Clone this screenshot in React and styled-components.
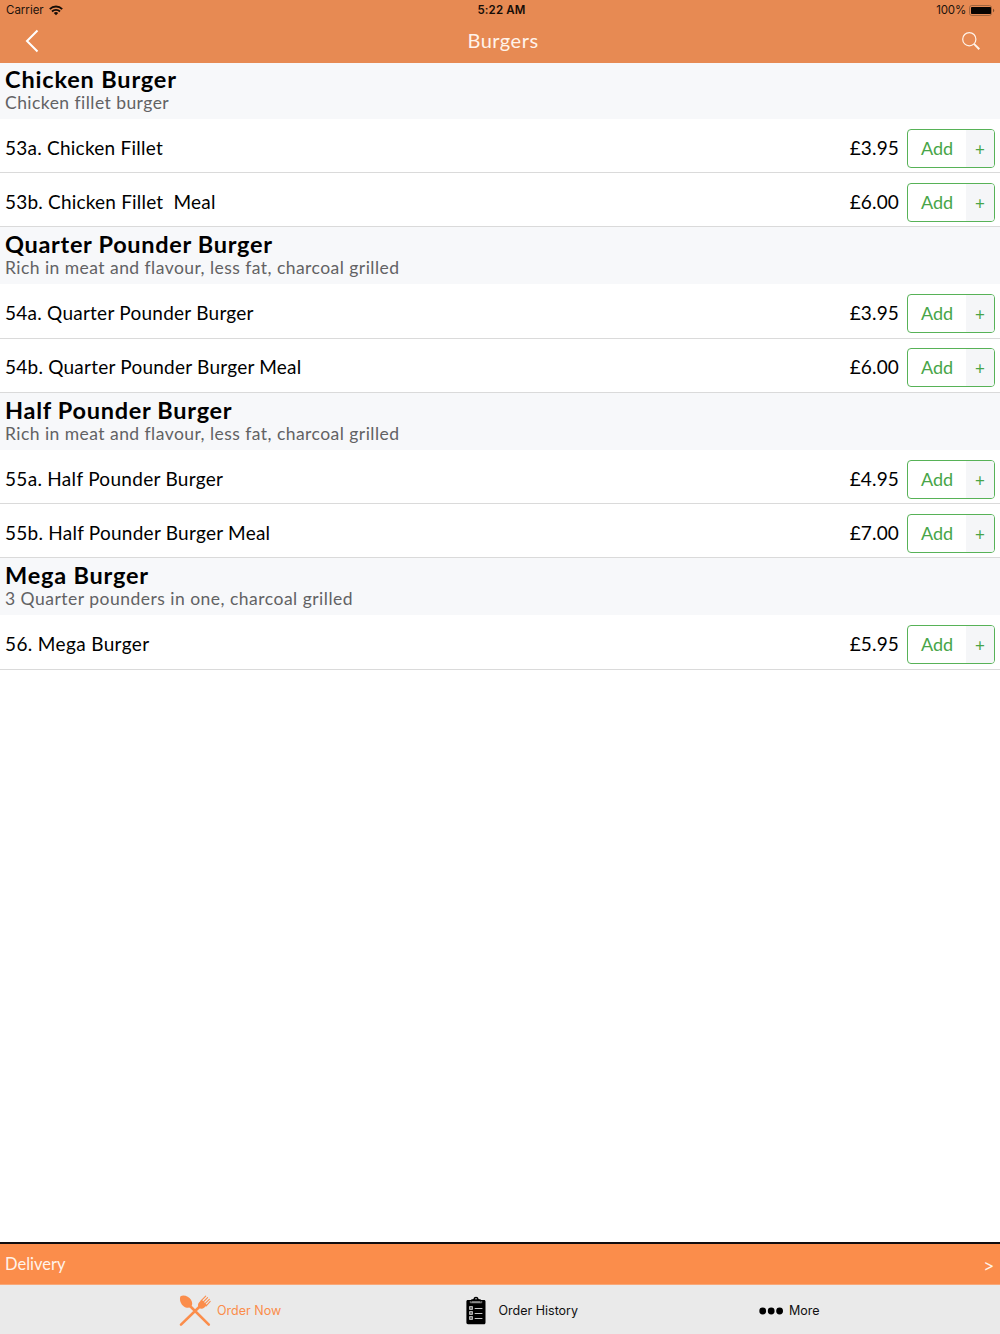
import React from 'react';
import styled, { createGlobalStyle } from 'styled-components';

const Global = createGlobalStyle`
  * { box-sizing: border-box; }
  body { margin: 0; background: #fff; font-family: Lato, "Liberation Sans", sans-serif; color: #000; }
  button { font: inherit; margin: 0; padding: 0; border: 0; background: none; color: inherit; }
  svg { display: block; }
`;

const Screen = styled.div`
  width: 1000px;
  height: 1334px;
  display: flex;
  flex-direction: column;
  overflow: hidden;
`;

const Header = styled.header`
  height: 63px;
  flex: none;
  background: #e78a53;
`;

const StatusBar = styled.div`
  height: 20px;
  display: grid;
  grid-template-columns: 1fr auto 1fr;
  align-items: center;
  padding: 1px 6px 0 6px;
  font: 11.5px/19px Inter, sans-serif;
  color: #1c120c;
`;

const Carrier = styled.div`
  display: flex;
  align-items: center;
  gap: 5.5px;
`;

const Clock = styled.div`
  font-weight: 600;
  color: #150d08;
  letter-spacing: 0.15px;
  padding-left: 3px;
`;

const Power = styled.div`
  display: flex;
  align-items: center;
  justify-content: flex-end;
  gap: 3px;
  letter-spacing: -0.2px;
  margin-right: -1px;
`;

const NavBar = styled.div`
  height: 42px;
  display: grid;
  grid-template-columns: 60px 1fr 60px;
  align-items: center;
  color: #fff;
`;

const Title = styled.h1`
  margin: 0;
  padding: 0 0 2px 6px;
  text-align: center;
  font-size: 20px;
  line-height: 24px;
  font-weight: 400;
  letter-spacing: 0.5px;
  color: #fff3ea;
`;

const BackButton = styled.button`
  padding-left: 24px;
`;

const SearchButton = styled.button`
  padding-left: 21px;
`;

const Menu = styled.main`
  flex: 1;
  min-height: 0;
`;

const GroupHeader = styled.div`
  height: ${(p) => (p.$first ? 55.8 : 56.8)}px;
  display: flex;
  flex-direction: column;
  justify-content: flex-end;
  padding: 0 5px 5px;
  background: #f7f8fa;
`;

const GroupTitle = styled.h2`
  margin: 0;
  font-size: 23.5px;
  line-height: 24px;
  font-weight: 700;
  letter-spacing: ${(p) => p.$track}px;
`;

const GroupNote = styled.p`
  margin: 0;
  font-size: 17.5px;
  line-height: 23px;
  color: #626264;
  letter-spacing: ${(p) => p.$track}px;
`;

const Row = styled.div`
  height: 54.35px;
  display: flex;
  align-items: center;
  padding: 5.4px 5px 0;
  border-bottom: 1px solid #dadada;
`;

const ItemName = styled.div`
  flex: 1;
  font-size: 19px;
  line-height: 24px;
  white-space: pre;
  letter-spacing: ${(p) => p.$track}px;
  padding-bottom: 1px;
`;

const Price = styled.div`
  font-size: 19px;
  line-height: 24px;
  letter-spacing: 0.15px;
  margin-right: 8px;
  padding-bottom: 1px;
`;

const AddButton = styled.button`
  width: 88px;
  height: 39px;
  display: flex;
  border: 1px solid #57b257;
  border-radius: 4px;
  overflow: hidden;
  color: #48a548;
  background: #fff;
`;

const AddLabel = styled.span`
  width: 58px;
  font-size: 18px;
  line-height: 37px;
  text-align: center;
`;

const AddPlus = styled.span`
  flex: 1;
  font-size: 17px;
  line-height: 39px;
  text-align: center;
  background: #f5f6f8;
`;

const DeliveryBar = styled.button`
  height: 43px;
  flex: none;
  display: flex;
  align-items: center;
  justify-content: space-between;
  padding: 0 6px 1px 5px;
  border-top: 2px solid #100d10;
  border-bottom: 1px solid #f9a878;
  background: #fb8d4b;
  color: #fff3ea;
  font-size: 16.5px;
`;

const Arrow = styled.span`
  padding-top: 2px;
  font: 400 16px/20px Inter, sans-serif;
`;

const TabBar = styled.nav`
  height: 49px;
  flex: none;
  display: grid;
  grid-template-columns: 359px 327px 314px;
  background: #eaeaea;
`;

const Tab = styled.button`
  display: flex;
  align-items: center;
  padding-left: ${(p) => p.$inset}px;
  gap: ${(p) => p.$gap}px;
  font: 12.5px/20px Inter, sans-serif;
  color: ${(p) => (p.$active ? '#fb8d4b' : '#111')};
  padding-top: 3px;
`;

const WifiIcon = () => (
  <svg width="14" height="11" viewBox="0 0 14 11" fill="none" stroke="#160d07" strokeWidth="1.9">
    <path d="M.8 4.1a8.8 8.8 0 0 1 12.4 0M3 6.5a5.7 5.7 0 0 1 8 0" />
    <path d="M4.8 8.1a3.1 3.1 0 0 1 4.4 0L7 10.3Z" fill="#160d07" stroke="none" />
  </svg>
);

const BatteryIcon = () => (
  <svg width="26" height="11" viewBox="0 0 26 11">
    <rect x=".5" y=".5" width="22" height="10" rx="2.3" fill="none" stroke="#a0653f" />
    <rect x="2" y="2" width="20" height="7" rx=".8" fill="#080402" />
    <path d="M24 3.7c1.7.6 1.7 3 0 3.6Z" fill="#80502f" />
  </svg>
);

const BackIcon = () => (
  <svg width="15" height="24" viewBox="0 0 15 24" fill="none" stroke="#fff" strokeWidth="2">
    <path d="M13.5 1.5 3 12l10.5 10.500" />
  </svg>
);

const SearchIcon = () => (
  <svg width="19" height="19" viewBox="0 0 19 19" fill="none" stroke="#fff3ea">
    <circle cx="8.300" cy="7.200" r="6.600" strokeWidth="1.200" />
    <path d="m13 11.900 5.300 5.300" strokeWidth="2" />
  </svg>
);

const CutleryIcon = () => (
  <svg width="32" height="32" viewBox="0 0 32 32" fill="#fb8d4b" stroke="#fb8d4b" strokeLinecap="round">
    <path d="M1.500 1.200C5-.4 9.800 1.300 12 4.800c1.700 2.700 1.500 5.300-.1 6.900-1.800 1.500-4.700 1.500-7.300-.5C1.200 8.600.2 4.200 1.500 1.200Z" stroke="none" />
    <path d="M11 11 29.800 29.600M21 11.200 2 29.600" strokeWidth="2.600" />
    <path d="m20.200 7.300 2.600-2.500 5.200 5.200-2.600 2.500c-1.800 1.700-4.200 1.500-5.500.3-1.300-1.300-1.200-4 .3-5.500Z" stroke="none" />
    <path d="m22 5.800 4.700-4.700M23.800 7.500l4.800-4.800M25.500 9.200l4.800-4.800M27.200 10.900l4-4.500" strokeWidth="1.100" />
  </svg>
);

const ClipboardIcon = () => (
  <svg width="20" height="30" viewBox="0 0 20 30">
    <path d="M2 4h3.500v2.500h9V4H18c1 0 1.500.6 1.500 1.500v21c0 1-.6 1.800-1.500 1.800H2c-1 0-1.600-.7-1.600-1.700V5.500C.4 4.500 1 4 2 4Z" fill="#000" />
    <path d="M4.500 5.500C4.500 3.700 5.500 3 7.500 3 7.500-.1 12.500-.1 12.500 3c2 0 3 .7 3 2.500Z" fill="#000" />
    <circle cx="10" cy="2.700" r=".7" fill="#eaeaea" />
    <path d="M4.300 5v1.800h11.400V5" fill="none" stroke="#aaa" strokeWidth=".7" />
    <path d="M8.700 12.500h7.700M8.700 17.500h7.700M8.700 22.500h7.700" stroke="#c4c4c4" />
    <path d="M3.500 10.500h3v3h-3zm0 5h3v3h-3zm0 5h3v3h-3z" fill="#777" stroke="#d0d0d0" strokeWidth=".8" />
  </svg>
);

const DotsIcon = () => (
  <svg width="24" height="8" viewBox="0 0 24 8">
    <circle cx="3.700" cy="4" r="3.400" />
    <circle cx="12.200" cy="4" r="3.400" />
    <circle cx="20.600" cy="4" r="3.400" />
  </svg>
);

const groups = [
  {
    title: 'Chicken Burger', note: 'Chicken fillet burger', track: 0.83, noteTrack: 0.45,
    items: [
      { name: '53a. Chicken Fillet', price: '£3.95', track: 0.24 },
      { name: '53b. Chicken Fillet  Meal', price: '£6.00', track: 0.2 },
    ],
  },
  {
    title: 'Quarter Pounder Burger', note: 'Rich in meat and flavour, less fat, charcoal grilled', track: 0.69, noteTrack: 0.455,
    items: [
      { name: '54a. Quarter Pounder Burger', price: '£3.95', track: 0.25 },
      { name: '54b. Quarter Pounder Burger Meal', price: '£6.00', track: 0.235 },
    ],
  },
  {
    title: 'Half Pounder Burger', note: 'Rich in meat and flavour, less fat, charcoal grilled', track: 0.71, noteTrack: 0.455,
    items: [
      { name: '55a. Half Pounder Burger', price: '£4.95', track: 0.3 },
      { name: '55b. Half Pounder Burger Meal', price: '£7.00', track: 0.25 },
    ],
  },
  {
    title: 'Mega Burger', note: '3 Quarter pounders in one, charcoal grilled', track: 0.79, noteTrack: 0.49,
    items: [{ name: '56. Mega Burger', price: '£5.95', track: 0.36 }],
  },
];

export default function App() {
  return (
    <Screen>
      <Global />
      <Header>
        <StatusBar>
          <Carrier>Carrier <WifiIcon /></Carrier>
          <Clock>5:22 AM</Clock>
          <Power>100% <BatteryIcon /></Power>
        </StatusBar>
        <NavBar>
          <BackButton aria-label="Back"><BackIcon /></BackButton>
          <Title>Burgers</Title>
          <SearchButton aria-label="Search"><SearchIcon /></SearchButton>
        </NavBar>
      </Header>
      <Menu>
        {groups.map((g, i) => (
          <section key={g.title}>
            <GroupHeader $first={i === 0}>
              <GroupTitle $track={g.track}>{g.title}</GroupTitle>
              <GroupNote $track={g.noteTrack}>{g.note}</GroupNote>
            </GroupHeader>
            {g.items.map((item) => (
              <Row key={item.name}>
                <ItemName $track={item.track}>{item.name}</ItemName>
                <Price>{item.price}</Price>
                <AddButton>
                  <AddLabel>Add</AddLabel>
                  <AddPlus>+</AddPlus>
                </AddButton>
              </Row>
            ))}
          </section>
        ))}
      </Menu>
      <DeliveryBar><span>Delivery</span><Arrow>&gt;</Arrow></DeliveryBar>
      <TabBar>
        <Tab $active $inset={179} $gap={6}><CutleryIcon />Order Now</Tab>
        <Tab $inset={107} $gap={12.5}><ClipboardIcon />Order History</Tab>
        <Tab $inset={73} $gap={6}><DotsIcon />More</Tab>
      </TabBar>
    </Screen>
  );
}
